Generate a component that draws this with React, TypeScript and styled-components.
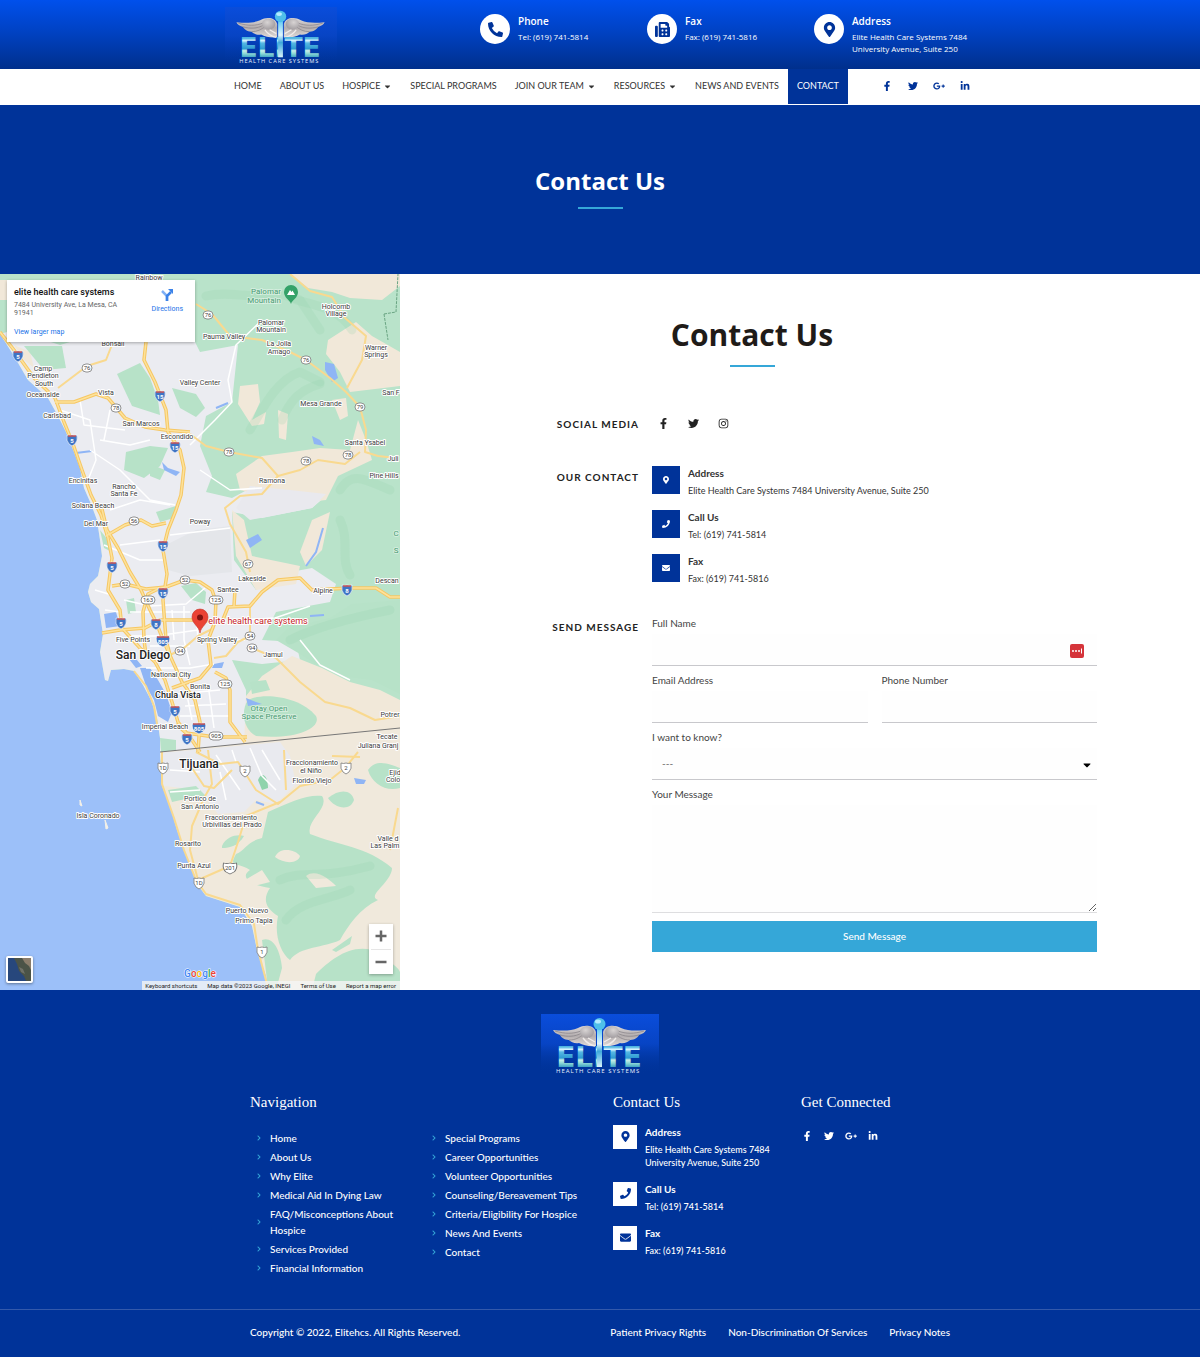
import React from 'react';
import styled, { createGlobalStyle, css } from 'styled-components';
import {
  FaCaretDown,
  FaChevronRight,
  FaEnvelope,
  FaFacebookF,
  FaFax,
  FaGooglePlusG,
  FaInstagram,
  FaLinkedinIn,
  FaMapMarkerAlt,
  FaPhone,
  FaPhoneAlt,
  FaTwitter,
} from 'react-icons/fa';

const blue = '#003399';
const sky = '#35a7d8';
const sans = '"Lato", "Open Sans", sans-serif';

const GlobalStyle = createGlobalStyle`
  *, *::before, *::after { box-sizing: border-box; }
  body {
    margin: 0;
    background: #fff;
    color: #333;
    font-family: ${sans};
    font-size: 10px;
    line-height: 14px;
  }
  h1, h2, h3, h4, p, ul { margin: 0; padding: 0; }
  ul { list-style: none; }
  a { color: inherit; text-decoration: none; }
  svg { display: block; }
`;

/* ---------- shared ---------- */

const Container = styled.div`
  width: 100%;
  max-width: 750px;
  margin: 0 auto;
`;

const Rule = styled.span`
  display: block;
  width: 45px;
  height: 2px;
  margin: 0 auto;
  background: ${sky};
`;

const Logo = ({ width, id }: { width: number; id: string }) => (
  <svg width={width} viewBox="0 0 118 60" role="img" aria-label="Elite Health Care Systems">
    <defs>
      <linearGradient id={`${id}-bg`} x1="0" y1="0" x2="0" y2="1">
        <stop offset="0" stopColor="#0a4ddb" />
        <stop offset="0.5" stopColor="#0744c4" />
        <stop offset="1" stopColor="#003399" stopOpacity="0" />
      </linearGradient>
      <linearGradient id={`${id}-letters`} gradientUnits="userSpaceOnUse" x1="0" y1="33" x2="0" y2="53">
        <stop offset="0" stopColor="#4fb4e0" />
        <stop offset="0.12" stopColor="#d9f4ff" />
        <stop offset="0.25" stopColor="#56b8e4" />
        <stop offset="0.55" stopColor="#2f9bd2" />
        <stop offset="0.65" stopColor="#c9efe9" />
        <stop offset="0.8" stopColor="#8fd9d6" />
        <stop offset="1" stopColor="#3fa3c4" />
      </linearGradient>
      <linearGradient id={`${id}-rod`} x1="0" y1="0" x2="0" y2="1">
        <stop offset="0" stopColor="#5ecbf2" />
        <stop offset="0.4" stopColor="#e2f6fd" />
        <stop offset="0.6" stopColor="#3fa9dc" />
        <stop offset="1" stopColor="#d6f2fa" />
      </linearGradient>
      <linearGradient id={`${id}-wing`} x1="0" y1="0" x2="0" y2="1">
        <stop offset="0" stopColor="#dcd8d8" />
        <stop offset="0.5" stopColor="#b3adae" />
        <stop offset="1" stopColor="#e2dcd9" />
      </linearGradient>
      <radialGradient id={`${id}-shoulder`} cx="0.4" cy="0.35" r="0.75">
        <stop offset="0" stopColor="#d8d4d4" />
        <stop offset="1" stopColor="#9a9599" />
      </radialGradient>
    </defs>
    <rect width="118" height="60" fill={`url(#${id}-bg)`} />
    {[1, -1].map((side) => (
      <g key={side} transform={side === 1 ? undefined : 'translate(117 0) scale(-1 1)'}>
        <path
          d="M12 16 C22 17 30 17 37 14 C44 10 53 11 55 18 L55 32 C49 33 42 31 38 29 C34 30 30 28 28 26 C23 26 20 23 19 21 C15 20 13 18 12 16Z"
          fill={`url(#${id}-wing)`}
        />
        <path d="M14 17 C24 20 32 20 40 17 M19 21 C27 23 33 23 41 19 M28 26 C34 26 38 24 43 20" fill="none" stroke="#8b868c" strokeWidth="0.8" />
        <ellipse cx="46" cy="18" rx="7" ry="6" fill={`url(#${id}-shoulder)`} />
        <path d="M42 24 C45 28 49 31 54 32 M47 24 L54 28" fill="none" stroke="#f1ecea" strokeWidth="1.4" />
      </g>
    ))}
    <text x="58" y="53" textAnchor="middle" fontFamily="DejaVu Sans, sans-serif" fontWeight="700" fontSize="28" fill={`url(#${id}-letters)`}>
      ELITE
    </text>
    <rect x="56" y="14" width="5" height="39" fill={`url(#${id}-rod)`} />
    <circle cx="58.5" cy="10" r="6" fill="#4fbfe9" />
    <ellipse cx="57" cy="7.5" rx="3" ry="2" fill="#b5ebff" />
    <text x="15" y="59" fontFamily="Open Sans, sans-serif" fontSize="6" letterSpacing="1" fill="#e9f1ff">
      HEALTH CARE SYSTEMS
    </text>
  </svg>
);

/* ---------- header ---------- */

const TopBar = styled.header`
  background: linear-gradient(#0050ec, #0042c4 45%, #002f8c);
`;

const TopGrid = styled(Container)`
  display: grid;
  grid-template-columns: 255px 167px 167px 1fr;
  padding: 7px 0 5px;
`;

const TopItem = styled.div`
  display: flex;
  gap: 8px;
  padding-top: 7px;
  color: #fff;
`;

const Disc = styled.span`
  display: flex;
  flex: none;
  align-items: center;
  justify-content: center;
  width: 30px;
  height: 30px;
  border-radius: 50%;
  background: #fff;
  color: ${blue};
  font-size: 15px;
`;

const TopTitle = styled.h2`
  font-family: "Open Sans", sans-serif;
  font-size: 10px;
  font-weight: 600;
  line-height: 14px;
`;

const TopText = styled.p`
  padding-top: 3px;
  font-family: "Open Sans", sans-serif;
  font-size: 8px;
  font-weight: 500;
  line-height: 12px;
`;

const NavBar = styled(Container)`
  display: flex;
  height: 36px;
`;

const NavLink = styled.a<{ $active?: boolean }>`
  display: flex;
  align-items: center;
  gap: 3px;
  height: 35px;
  padding: 0 9px;
  font-size: 9px;
  white-space: nowrap;
  text-transform: uppercase;
  ${(p) =>
    p.$active &&
    css`
      background: ${blue};
      color: #fff;
    `}
`;

const Social = styled.div<{ $gap: number; $size: number }>`
  display: flex;
  align-items: center;
  gap: ${(p) => p.$gap}px;
  font-size: ${(p) => p.$size}px;
  a {
    display: flex;
    justify-content: center;
    width: 12px;
  }
`;

const NavSocial = styled(Social)`
  margin-left: auto;
  padding-right: 4px;
  height: 35px;
  color: ${blue};
`;

/* ---------- hero ---------- */

const Hero = styled.section`
  padding: 59px 0 65px;
  background: ${blue};
  color: #fff;
  text-align: center;
`;

const HeroTitle = styled.h1`
  margin-bottom: 9px;
  font-family: "Open Sans", sans-serif;
  font-size: 24px;
  font-weight: 700;
  line-height: 34px;
`;

/* ---------- map ---------- */

const Main = styled.main`
  display: grid;
  grid-template-columns: 1fr 2fr;
`;

const MapFrame = styled.section`
  position: relative;
  overflow: hidden;
  background: #9cc0f9;
  font-family: Roboto, sans-serif;
`;

const MapCanvas = styled.svg`
  position: absolute;
  inset: 0;
  width: 100%;
  height: 100%;
`;

const PlaceCard = styled.div`
  position: absolute;
  top: 6px;
  left: 7px;
  display: flex;
  justify-content: space-between;
  width: 188px;
  padding: 6px 12px 6px 7px;
  background: #fff;
  box-shadow: 0 1px 3px rgba(0, 0, 0, 0.3);
  font-size: 7px;
  line-height: 8px;
`;

const PlaceName = styled.h2`
  font-size: 9px;
  font-weight: 500;
  line-height: 12px;
  color: #111;
`;

const PlaceAddress = styled.p`
  width: 118px;
  margin: 3px 0 11px;
  color: #666;
`;

const MapLink = styled.a`
  color: #1a73e8;
`;

const Directions = styled(MapLink)`
  display: flex;
  flex-direction: column;
  align-items: center;
  gap: 3px;
  padding-top: 2px;
`;

const ZoomBox = styled.div`
  position: absolute;
  right: 7px;
  bottom: 16px;
  display: flex;
  flex-direction: column;
  width: 24px;
  padding: 0 2px;
  background: #fff;
  box-shadow: 0 1px 3px rgba(0, 0, 0, 0.3);
`;

const ZoomButton = styled.button`
  display: flex;
  align-items: center;
  justify-content: center;
  height: 25px;
  padding: 0;
  border: 0;
  background: none;
  & + & {
    border-top: 1px solid #e6e6e6;
  }
`;

const Satellite = styled.button`
  position: absolute;
  left: 6px;
  bottom: 7px;
  width: 27px;
  height: 27px;
  padding: 0;
  overflow: hidden;
  border: 2px solid #fff;
  border-radius: 2px;
  background: #23406e;
  box-shadow: 0 1px 3px rgba(0, 0, 0, 0.4);
`;

const Attribution = styled.div`
  position: absolute;
  right: 0;
  bottom: 0;
  display: flex;
  gap: 10px;
  padding: 0 4px 0 3px;
  background: rgba(245, 245, 245, 0.8);
  color: #222;
  font-size: 6px;
  line-height: 9px;
  white-space: nowrap;
`;

type Label = [number, number, string];

const towns: Label[] = [
  [149, 280, 'Rainbow'], [113, 346, 'Bonsall'], [224, 339, 'Pauma Valley'],
  [271, 325, 'Palomar'], [271, 332, 'Mountain'], [279, 346, 'La Jolla'], [279, 354, 'Amago'],
  [336, 309, 'Holcomb'], [336, 316, 'Village'], [376, 350, 'Warner'], [376, 357, 'Springs'],
  [43, 371, 'Camp'], [43, 378, 'Pendleton'], [44, 386, 'South'], [43, 397, 'Oceanside'],
  [106, 395, 'Vista'], [57, 418, 'Carlsbad'], [200, 385, 'Valley Center'], [141, 426, 'San Marcos'],
  [177, 439, 'Escondido'], [321, 406, 'Mesa Grande'], [391, 395, 'San F'], [365, 445, 'Santa Ysabel'],
  [393, 461, 'Juli'], [384, 478, 'Pine Hills'], [272, 483, 'Ramona'], [83, 483, 'Encinitas'],
  [124, 489, 'Rancho'], [124, 496, 'Santa Fe'], [93, 508, 'Solana Beach'], [96, 526, 'Del Mar'],
  [200, 524, 'Poway'], [252, 581, 'Lakeside'], [228, 592, 'Santee'], [323, 593, 'Alpine'],
  [387, 583, 'Descan'], [133, 642, 'Five Points'], [217, 642, 'Spring Valley'], [273, 657, 'Jamul'],
  [171, 677, 'National City'], [200, 689, 'Bonita'], [165, 729, 'Imperial Beach'], [390, 717, 'Potrer'],
  [387, 739, 'Tecate'], [378, 748, 'Juliana Granj'], [312, 765, 'Fraccionamiento'], [311, 773, 'el Niño'],
  [312, 783, 'Florido Viejo'], [395, 775, 'Ejid'], [393, 782, 'Colo'], [200, 801, 'Portico de'],
  [200, 809, 'San Antonio'], [231, 820, 'Fraccionamiento'], [232, 827, 'Urbivillas del Prado'],
  [98, 818, 'Isla Coronado'], [188, 846, 'Rosarito'], [194, 868, 'Punta Azul'], [388, 841, 'Valle d'],
  [385, 848, 'Las Palm'], [247, 913, 'Puerto Nuevo'], [254, 923, 'Primo Tapia'],
];

const parks: Label[] = [
  [266, 294, 'Palomar'], [264, 303, 'Mountain'], [269, 711, 'Otay Open'], [269, 719, 'Space Preserve'],
  [396, 536, 'C'], [396, 553, 'S'],
];

const ovals: Label[] = [
  [208, 315, '76'], [87, 368, '76'], [306, 360, '76'], [116, 408, '78'], [360, 407, '79'], [229, 452, '78'],
  [306, 461, '78'], [348, 455, '78'], [134, 521, '56'], [248, 564, '67'], [125, 584, '52'], [185, 580, '52'],
  [148, 600, '163'], [216, 600, '125'], [250, 636, '54'], [252, 648, '94'], [180, 651, '94'],
  [225, 684, '125'], [216, 736, '905'],
];

const interstates: Label[] = [
  [18, 356, '5'], [160, 396, '15'], [175, 447, '15'], [72, 440, '5'], [163, 546, '15'], [112, 567, '5'],
  [163, 593, '15'], [121, 623, '5'], [156, 624, '8'], [163, 641, '805'], [347, 590, '8'], [175, 711, '5'],
  [199, 728, '805'], [187, 739, '5'],
];

const mexican: Label[] = [
  [163, 768, '1D'], [245, 771, '2'], [346, 768, '2'], [230, 868, '201'], [199, 883, '1D'], [262, 952, '1'],
];

const coast =
  'M0 334 L14 356 L28 380 L48 398 L58 416 L66 432 L74 452 L80 468 L84 488 L91 504 L97 520 L100 540 L102 556 L98 576 L90 584 L88 592 L91 602 L99 609 L103 634 L100 652 L105 680 L108 681 L111 670 L124 669 L134 671 L143 685 L151 700 L157 718 L160 738 L160 753 L162 786 L170 806 L177 830 L187 857 L197 884 L206 896 L240 907 L252 926 L257 950 L266 976 L269 990';

const freeways = [
  'M0 332 L14 350 L34 378 L55 398 L64 422 L73 444 L82 470 L91 495 L101 515 L108 538 L112 558 L108 590 L120 610 L122 628',
  'M101 505 L107 530 L118 548 L130 572 L141 590 L150 610 L156 622 L164 642 L172 660 L182 682 L195 700 L200 722 L198 752',
  'M146 342 L144 360 L155 382 L166 410 L168 432 L180 450 L184 468 L181 495 L176 510 L168 530 L163 550 L167 574 L163 600 L166 640 L170 655',
  'M102 633 L120 630 L145 628 L160 620 L200 620 L222 622 L228 607 L250 606 L262 592 L278 580 L300 578 L312 590 L350 588 L376 588 L390 597 L400 597',
  'M122 628 L140 648 L155 662 L165 680 L172 702 L178 722 L192 740 L200 752',
  'M55 402 L74 402 L96 394 L108 398 L125 418 L145 427 L165 430 L190 432',
  'M106 536 L125 525 L141 520 L152 526 L166 523',
  'M112 586 L125 584 L146 589 L166 587 L185 580 L200 582 L212 590 L216 602',
  'M160 588 L148 594 L143 612 L144 640 L146 655',
  'M216 600 L215 622 L208 640 L211 665 L200 678 L172 688',
  'M215 672 L226 678 L230 690 L230 722 L245 742',
  'M176 724 L186 733 L215 737 L247 737',
  'M235 590 L234 606',
];

const highways = [
  'M58 388 L87 366 L106 360 L113 342',
  'M196 304 L212 314 L230 336 L262 340 L290 352 L306 360 L330 378 L346 392 L360 407 L366 430 L365 452 L378 456 L396 458',
  'M290 274 L310 291 L332 297 L345 318 L366 336 L362 360 L347 388',
  'M190 434 L206 446 L229 452 L262 458 L278 476 L300 470 L318 460 L345 464 L360 452',
  'M278 476 L262 494 L240 496 L225 508 L230 524 L246 552 L250 572',
  'M170 655 L184 648 L198 636 L214 628',
  'M214 658 L226 656 L238 642 L250 636 L250 606',
  'M252 648 L276 658 L300 682 L325 702 L350 708 L375 720 L400 716',
  'M134 671 L146 686 L154 706 L158 730',
  'M162 752 L162 784 L174 818 L184 850 L196 880 L206 894 L240 905 L254 924 L258 950 L268 988',
  'M196 752 L220 764 L238 762 L256 790 L278 804 L300 786 L330 780 L345 768 L358 752',
  'M208 750 L212 784 L204 798 L192 826 L190 850 L198 880 L230 866 L238 842 L246 816 L280 802',
  'M190 765 L204 786 L214 788 L232 770',
  'M284 750 L286 790 M332 756 L360 757 M398 808 L390 850',
];

const streets =
  'M60 410 L90 420 L96 460 L88 480 M80 400 L84 425 L125 430 M100 440 L130 445 L150 440 M90 450 L120 470 L150 500 L175 505 M110 410 L104 440 M190 445 L215 420 L232 402 L228 380 L236 345 L262 320 M200 470 L230 490 L262 488 M110 510 L140 500 L170 505 M120 545 L160 540 M104 545 L140 560 L165 560 M170 535 L230 528 M95 590 L112 595 M105 610 L120 612 M124 600 L150 606 L186 604 L205 588 M130 612 L190 612 M130 636 L155 636 L198 630 M150 646 L190 646 M184 606 L184 640 L190 665 M172 610 L174 640 M196 610 L198 640 M146 668 L190 668 L214 664 M176 694 L220 690 M185 706 L226 704 M180 716 L230 716 M186 690 L192 720 M208 684 L214 728 M222 640 L245 640 M238 620 L275 618 L310 606 M170 770 L200 772 M220 772 L226 800 M250 748 L262 776 L276 790 M262 750 L280 780 M216 755 L240 790 M170 792 L200 790 M232 750 L236 762 M300 640 L320 665 L350 680';

const greens = [
  'M117 374 L140 363 L150 378 L158 400 L160 415 L132 406Z',
  'M172 388 L196 394 L205 408 L196 417 L180 408Z',
  'M126 452 L150 446 L168 448 L160 466 L144 478 L124 470Z',
  'M24 346 L62 346 L66 368 L44 370Z',
  'M181 586 L196 583 L206 592 L205 604 L192 600Z',
  'M150 464 L165 470 L160 480 L150 476Z',
  'M126 600 L134 598 L136 612 L128 614Z',
  'M156 512 L176 506 L174 518 L160 522Z',
  'M100 530 L108 540 L112 552 L104 548Z',
  'M248 700 C262 692 300 696 316 716 C322 728 296 740 256 736 C244 730 240 712 248 700Z',
  'M250 682 L266 680 L270 690 L252 694Z',
  'M276 640 L288 628 L330 618 L352 604 L400 600 L400 694 L372 680 L340 676 L316 664 L300 654Z',
  'M168 790 L196 786 L206 796 L190 798 L172 802Z',
  'M160 738 L176 740 L176 750 L161 752Z',
  'M368 770 C376 758 390 764 400 768 L400 788 C386 792 372 784 368 770Z',
  'M328 798 C340 788 352 790 354 800 C350 812 334 808 328 798Z',
  'M268 812 C290 802 308 794 322 796 C330 808 306 820 310 834 C340 846 366 846 392 868 C392 882 366 896 378 900 C360 908 348 926 340 940 C324 948 300 946 290 960 C280 952 274 934 278 916 C266 908 262 900 270 888 C254 886 238 878 250 870 C238 862 228 868 236 854 C246 850 246 842 262 838Z',
  'M222 846 C226 836 238 834 244 836 C238 846 230 848 222 848Z',
  'M262 940 C272 936 280 948 282 968 L276 990 L268 988Z',
  'M316 974 C330 960 350 944 372 950 C386 960 398 966 400 972 L400 990 L312 990Z',
  'M332 950 L352 936 L350 944 L336 952Z',
];

const beiges = [
  'M290 274 L400 274 L400 286 L382 300 L350 298 L332 292 L308 288Z',
  'M328 340 L356 322 L372 336 L400 352 L400 386 L350 392 L340 372 L326 354Z',
  'M240 386 L258 384 L260 402 L252 420 L266 412 L264 424 L252 426 L238 404Z',
  'M278 410 L288 414 L286 440 L279 438Z',
  'M236 474 L262 456 L292 452 L320 448 L350 450 L358 420 L366 440 L372 460 L338 476 L326 500 L292 504 L240 490Z',
  'M332 400 L346 398 L348 416 L340 420Z',
  'M232 510 L244 520 L252 556 L300 566 L296 584 L256 590 L236 556Z',
  'M0 280 L8 280 L8 300 L0 300Z',
  'M14 345 L30 352 L34 368 L22 358Z',
  'M312 520 L330 512 L322 550 L306 566 L300 552Z',
  'M244 746 L246 696 L262 676 L292 656 L322 668 L350 682 L380 690 L400 700 L400 732Z',
];

const relief = [
  'M206 296 C230 290 250 300 280 294 L300 300 L320 330',
  'M250 430 C262 410 276 380 300 372 L320 382',
  'M296 300 C320 306 340 310 352 330',
  'M282 420 C290 400 300 390 320 384',
  'M340 490 C352 470 366 480 390 490',
  'M290 640 C310 630 340 620 390 610',
  'M340 520 C350 540 340 560 350 575',
  'M280 880 C300 870 320 880 370 866',
  'M286 920 C300 900 330 900 350 890',
];

const shieldPath = 'M-5 -5 Q-2.5 -4 0 -5 Q2.5 -4 5 -5 Q6 1 3 4 L0 6 L-3 4 Q-6 1 -5 -5Z';

const CountyMap = () => (
  <MapCanvas viewBox="0 274 400 716" preserveAspectRatio="xMinYMin slice" role="img" aria-label="Map of San Diego County">
    <rect y="274" width="400" height="716" fill="#9cc0f9" />
    <path d={`${coast} L400 990 L400 274 L0 274Z`} fill="#b9e3ca" />
    <path
      d="M0 334 L14 330 L60 345 L70 342 L195 342 L200 352 L238 345 L232 402 L206 416 L200 446 L212 476 L206 492 L232 498 L262 482 L300 488 L326 496 L312 508 L262 518 L232 512 L234 560 L256 590 L280 574 L312 568 L336 584 L330 602 L276 612 L262 640 L296 642 L300 660 L262 664 L232 660 L246 690 L246 745 L160 753 L160 738 L157 718 L151 700 L143 685 L134 671 L124 669 L111 670 L108 681 L105 680 L100 652 L103 634 L99 609 L91 602 L88 592 L90 584 L98 576 L102 556 L100 540 L97 520 L91 504 L84 488 L80 468 L74 452 L66 432 L58 416 L48 398 L28 380 L14 356Z"
      fill="#ebecf1"
    />
    <path d="M160 548 L196 530 L230 526 L232 572 L190 576 L168 570Z" fill="#e4e6ea" />
    {beiges.map((d) => <path key={d} d={d} fill="#f1e8d9" />)}
    <path d="M250 486 L290 490 L326 494 L312 508 L250 520 L236 508Z" fill="#e9e9ee" />
    <path
      d="M160 752 L400 728 L400 990 L269 990 L266 976 L257 950 L252 926 L240 907 L206 896 L197 884 L187 857 L177 830 L170 806 L162 786Z"
      fill="#f0e9dc"
    />
    <path d="M160 753 L280 742 L290 756 L296 784 L276 804 L256 800 L244 812 L218 814 L200 790 L164 786Z" fill="#e9eaef" />
    {greens.map((d) => <path key={d} d={d} fill="#b7e2c8" />)}
    <path d="M275 857 C280 846 296 850 300 856 C298 864 284 864 275 857Z M306 876 C316 868 330 880 336 886 L316 888Z M245 880 L262 870 L270 882 L254 886Z" fill="#f0e9dc" />
    <path d="M258 780 C262 770 268 776 268 788 L262 790Z" fill="#8fd3ac" />
    {relief.map((d) => <path key={d} d={d} fill="none" stroke="#8fd0aa" strokeOpacity="0.2" strokeWidth="9" strokeLinejoin="round" strokeLinecap="round" />)}
    <path
      d="M140 668 L150 668 L158 680 L166 694 L172 712 L168 722 L158 716 L154 700 L146 686Z M104 614 L116 612 L120 626 L106 628Z M122 650 L132 654 L142 666 L136 668Z M325 362 L334 364 L338 378 L332 382 L325 370Z M246 540 L258 534 L262 540 L250 548Z M214 664 L224 662 L222 668 L212 668Z M246 698 L256 702 L262 704 L248 706Z M312 436 L320 440 L324 446 L314 444Z M354 778 L366 780 L364 784 L356 784Z M162 462 L168 468 L180 472 L176 476 L164 470Z"
      fill="#8fb5f5"
    />
    <path d="M323 528 L316 552 L306 566 M76 453 L92 451 M216 408 L228 403 M310 616 L324 615 M256 802 L264 805" fill="none" stroke="#8fb5f5" strokeWidth="2" />
    <path d={streets} fill="none" stroke="#fff" strokeWidth="1.5" strokeLinejoin="round" />
    {highways.map((d) => <path key={d} d={d} fill="none" stroke="#f9d98f" strokeWidth="2" strokeLinejoin="round" />)}
    {freeways.map((d) => <path key={d} d={d} fill="none" stroke="#f6c763" strokeWidth="3.5" strokeLinejoin="round" />)}
    {freeways.map((d) => <path key={d} d={d} fill="none" stroke="#fde29b" strokeWidth="1.5" strokeLinejoin="round" />)}
    <path d="M160 752 L400 728" stroke="#777" strokeWidth="1" />
    <path d="M384 314 L396 312 L398 274 M384 314 L388 340" fill="none" stroke="#6aa583" strokeDasharray="3 1" />
    <path d="M80 800 L82 806 L80 805Z M105 820 L108 828 L106 829Z" fill="#f3f0e8" stroke="#f3f0e8" />

    <g fontFamily="Roboto, sans-serif" textAnchor="middle">
      {ovals.map(([x, y, t]) => (
        <g key={`${x}-${y}`} fontSize="6" fill="#444">
          <rect x={x - (t.length > 2 ? 7 : 5)} y={y - 4} width={t.length > 2 ? 14 : 10} height="8" rx="4" fill="#fff" stroke="#777" strokeWidth="0.8" />
          <text x={x} y={y + 2}>{t}</text>
        </g>
      ))}
      {interstates.map(([x, y, t]) => (
        <g key={`${x}-${y}`} transform={`translate(${x} ${y})`} fontSize="6" fontWeight="700" fill="#fff">
          <path d={shieldPath} transform={t.length > 2 ? 'scale(1.3 1)' : undefined} fill="#3f74c4" stroke="#fff" strokeWidth="0.6" />
          <path d={t.length > 2 ? 'M-6 -4 H6' : 'M-4 -4 H4'} stroke="#d0504c" strokeWidth="1.4" />
          <text y="3">{t}</text>
        </g>
      ))}
      {mexican.map(([x, y, t]) => (
        <g key={`${x}-${y}`} transform={`translate(${x} ${y})`} fontSize="6" fill="#444">
          <path d={shieldPath} transform={t.length > 2 ? 'scale(1.3 1)' : undefined} fill="#fff" stroke="#777" strokeWidth="0.8" />
          <text y="2">{t}</text>
        </g>
      ))}
      <g stroke="#fff" strokeWidth="2" strokeLinejoin="round" paintOrder="stroke" fill="#3c3c3c">
        {towns.map(([x, y, t]) => <text key={`${x}-${y}`} x={x} y={y} fontSize="7">{t}</text>)}
        {parks.map(([x, y, t]) => <text key={`${x}-${y}`} x={x} y={y} fontSize="8" fill="#4c9c74" strokeOpacity="0.4">{t}</text>)}
        <g fontWeight="500" fill="#222">
          <text x="143" y="659" fontSize="12">San Diego</text>
          <text x="178" y="698" fontSize="9">Chula Vista</text>
          <text x="199" y="768" fontSize="12">Tijuana</text>
        </g>
        <text x="258" y="624" fontSize="9" fill="#c5221f">elite health care systems</text>
      </g>
      <g transform="translate(200 0)">
        <path d="M0 633 C-1 626 -8 624 -8 617 A8 8 0 0 1 8 617 C8 624 1 626 0 633Z" fill="#ea4335" stroke="#c5362b" strokeWidth="0.6" />
        <circle cy="617.5" r="3" fill="#811411" />
      </g>
      <path d="M291 304 C290 300 284 298 284 292 A7 7 0 0 1 298 292 C298 298 292 300 291 304Z" fill="#34a268" />
      <path d="M287 295 L290 290 L291.5 292 L292.5 290.5 L295 295Z" fill="#fff" />
      <text x="200" y="977" fontSize="10" fontWeight="500" stroke="#fff" strokeWidth="1" paintOrder="stroke">
        <tspan fill="#4285f4">G</tspan><tspan fill="#ea4335">o</tspan><tspan fill="#fbbc05">o</tspan><tspan fill="#4285f4">g</tspan><tspan fill="#34a853">l</tspan><tspan fill="#ea4335">e</tspan>
      </text>
    </g>
  </MapCanvas>
);

const MapPanel = () => (
  <MapFrame aria-label="Location">
    <CountyMap />
    <PlaceCard>
      <div>
        <PlaceName>elite health care systems</PlaceName>
        <PlaceAddress>7484 University Ave, La Mesa, CA 91941</PlaceAddress>
        <MapLink href="#map">View larger map</MapLink>
      </div>
      <Directions href="#directions">
        <svg width="14" height="14" viewBox="0 0 14 14" aria-hidden="true">
          <path d="M7 13 V8 L2 3" fill="none" stroke="#7fb0f5" strokeWidth="2.5" />
          <path d="M7 13 V8 L11 4" fill="none" stroke="#3b82e8" strokeWidth="2.5" />
          <path d="M8 1 H13 V6Z" fill="#3b82e8" />
        </svg>
        Directions
      </Directions>
    </PlaceCard>
    <ZoomBox>
      <ZoomButton type="button" aria-label="Zoom in">
        <svg width="12" height="12" viewBox="0 0 12 12"><path d="M6 0.5 V11.5 M0.5 6 H11.5" stroke="#666" strokeWidth="2.5" /></svg>
      </ZoomButton>
      <ZoomButton type="button" aria-label="Zoom out">
        <svg width="12" height="12" viewBox="0 0 12 12"><path d="M0.5 6 H11.5" stroke="#666" strokeWidth="2.5" /></svg>
      </ZoomButton>
    </ZoomBox>
    <Satellite type="button" aria-label="Show satellite imagery">
      <svg width="23" height="23" viewBox="0 0 23 23">
        <rect width="23" height="23" fill="#27477c" />
        <path d="M6 0 L9 6 L11 13 L16 18 L18 23 H23 V0Z" fill="#4b5347" />
        <path d="M14 0 L17 5 L21 8 L23 12 V0Z" fill="#8b7d6b" />
        <path d="M11 9 L15 11 L17 16 L13 14Z" fill="#6f7168" />
      </svg>
    </Satellite>
    <Attribution>
      <span>Keyboard shortcuts</span>
      <span>Map data ©2023 Google, INEGI</span>
      <a href="#terms">Terms of Use</a>
      <a href="#report">Report a map error</a>
    </Attribution>
  </MapFrame>
);

/* ---------- contact panel ---------- */

const Panel = styled.section`
  padding: 39px 103px 38px 7px;
`;

const PanelTitle = styled.h2`
  margin-bottom: 8px;
  color: #1f1b18;
  font-family: "Open Sans", sans-serif;
  font-size: 30px;
  font-weight: 700;
  line-height: 44px;
  text-align: center;
`;

const Rows = styled.div`
  display: grid;
  gap: 31px;
  margin-top: 46px;
`;

const Row = styled.div`
  display: grid;
  grid-template-columns: 232px 1fr;
  gap: 13px;
`;

const RowLabel = styled.h3`
  padding-top: 4px;
  color: #222;
  font-size: 10px;
  font-weight: 700;
  letter-spacing: 1px;
  line-height: 14px;
  text-align: right;
  text-transform: uppercase;
`;

const RowSocial = styled(Social)`
  height: 22px;
  padding-left: 5px;
  color: #222;
`;

const ContactList = styled.ul`
  display: flex;
  flex-direction: column;
  gap: 13px;
`;

const ContactItem = styled.li`
  display: flex;
  gap: 8px;
`;

const Tile = styled.span<{ $invert?: boolean }>`
  display: flex;
  flex: none;
  align-items: center;
  justify-content: center;
  width: ${(p) => (p.$invert ? 24 : 28)}px;
  height: ${(p) => (p.$invert ? 24 : 28)}px;
  background: ${(p) => (p.$invert ? '#fff' : blue)};
  color: ${(p) => (p.$invert ? blue : '#fff')};
  font-size: ${(p) => (p.$invert ? 11 : 8)}px;
`;

const ItemTitle = styled.h4`
  margin-bottom: 4px;
  font-size: 10px;
  font-weight: 700;
  line-height: 14px;
`;

const ItemText = styled.p`
  font-size: 9px;
  line-height: 13px;
`;

const Form = styled.form`
  display: grid;
  grid-template-columns: 1fr 1fr;
  gap: 7px 14px;
`;

const Field = styled.div<{ $half?: boolean }>`
  position: relative;
  display: flex;
  flex-direction: column;
  gap: 3px;
  grid-column: ${(p) => (p.$half ? 'auto' : '1 / -1')};
`;

const FieldLabel = styled.label`
  color: #444;
  font-size: 10px;
  line-height: 15px;
`;

const control = css`
  width: 100%;
  border: 0;
  border-bottom: 1px solid #c8c8cc;
  border-radius: 0;
  outline: 0;
  background: #fefefe;
  color: #666;
  font: 10px/15px ${sans};
`;

const Input = styled.input`
  ${control}
  height: 32px;
  padding: 0 10px;
`;

const Select = styled.select`
  ${control}
  height: 32px;
  padding: 0 10px;
  appearance: none;
`;

const SelectCaret = styled(FaCaretDown)`
  position: absolute;
  right: 4px;
  bottom: 9px;
  color: #000;
  font-size: 12px;
  pointer-events: none;
`;

const PasswordBadge = styled.svg`
  position: absolute;
  right: 13px;
  bottom: 8px;
`;

const TextArea = styled.textarea`
  ${control}
  display: block;
  height: 108px;
  padding: 5px 10px;
  border-color: #dedee0;
  resize: vertical;
`;

const Submit = styled.button`
  grid-column: 1 / -1;
  height: 31px;
  margin-top: 1px;
  border: 0;
  background: ${sky};
  color: #fff;
  font: 500 10px/15px ${sans};
`;

/* ---------- footer ---------- */

const Footer = styled.footer`
  padding-top: 24px;
  background: ${blue};
  color: #fff;
  font-weight: 500;
`;

const FooterLogo = styled.div`
  display: flex;
  justify-content: center;
  margin-bottom: 18px;
`;

const FooterInner = styled.div`
  width: 100%;
  max-width: 700px;
  margin: 0 auto;
`;

const FooterGrid = styled(FooterInner)`
  display: grid;
  grid-template-columns: 363px 188px 1fr;
  padding-bottom: 33px;
`;

const FooterTitle = styled.h3`
  font-family: "Liberation Serif", serif;
  font-size: 15px;
  font-weight: 400;
  line-height: 20px;
`;

const LinkColumns = styled.div`
  display: grid;
  grid-template-columns: 175px 1fr;
  align-items: start;
  margin-top: 18px;
`;

const LinkList = styled.ul`
  display: flex;
  flex-direction: column;
  gap: 3px;
`;

const LinkItem = styled.li`
  display: flex;
  align-items: center;
  gap: 8px;
  padding: 0 16px 0 6px;
  font-size: 10px;
  line-height: 16px;
  svg {
    flex: none;
    width: 6px;
    color: ${sky};
    font-size: 6px;
  }
`;

const FooterContacts = styled(ContactList)`
  margin-top: 13px;
`;

const FooterSocial = styled(Social)`
  height: 22px;
  margin-top: 13px;
`;

const Legal = styled.div`
  border-top: 1px solid #3359ab;
`;

const LegalInner = styled(FooterInner)`
  display: flex;
  justify-content: space-between;
  padding: 15px 0 17px;
  font-size: 10px;
  line-height: 15px;
`;

const LegalLinks = styled.nav`
  display: flex;
  gap: 22px;
`;

/* ---------- data ---------- */

const navItems = [
  { label: 'Home' },
  { label: 'About Us' },
  { label: 'Hospice', menu: true },
  { label: 'Special Programs' },
  { label: 'Join Our Team', menu: true },
  { label: 'Resources', menu: true },
  { label: 'News and Events' },
  { label: 'Contact', active: true },
];

const contacts = [
  { title: 'Address', text: 'Elite Health Care Systems 7484 University Avenue, Suite 250', icon: <FaMapMarkerAlt /> },
  { title: 'Call Us', text: 'Tel: (619) 741-5814', icon: <FaPhone /> },
  { title: 'Fax', text: 'Fax: (619) 741-5816', icon: <FaEnvelope /> },
];

const footerLinks = [
  ['Home', 'About Us', 'Why Elite', 'Medical Aid In Dying Law', 'FAQ/Misconceptions About Hospice', 'Services Provided', 'Financial Information'],
  ['Special Programs', 'Career Opportunities', 'Volunteer Opportunities', 'Counseling/Bereavement Tips', 'Criteria/Eligibility For Hospice', 'News And Events', 'Contact'],
];

const shareLinks = (
  <>
    <a href="#facebook" aria-label="Facebook"><FaFacebookF /></a>
    <a href="#twitter" aria-label="Twitter"><FaTwitter /></a>
    <a href="#google" aria-label="Google Plus"><FaGooglePlusG size={12} /></a>
    <a href="#linkedin" aria-label="LinkedIn"><FaLinkedinIn /></a>
  </>
);

const ContactItems = ({ invert }: { invert?: boolean }) => (
  <>
    {contacts.map((c) => (
      <ContactItem key={c.title}>
        <Tile $invert={invert}>{c.icon}</Tile>
        <div>
          <ItemTitle>{c.title}</ItemTitle>
          <ItemText>{c.text}</ItemText>
        </div>
      </ContactItem>
    ))}
  </>
);

export default function App() {
  return (
    <>
      <GlobalStyle />
      <TopBar>
        <TopGrid>
          <a href="#home"><Logo width={112} id="top" /></a>
          <TopItem>
            <Disc><FaPhoneAlt /></Disc>
            <div><TopTitle>Phone</TopTitle><TopText>Tel: (619) 741-5814</TopText></div>
          </TopItem>
          <TopItem>
            <Disc><FaFax /></Disc>
            <div><TopTitle>Fax</TopTitle><TopText>Fax: (619) 741-5816</TopText></div>
          </TopItem>
          <TopItem>
            <Disc><FaMapMarkerAlt /></Disc>
            <div><TopTitle>Address</TopTitle><TopText>Elite Health Care Systems 7484 University Avenue, Suite 250</TopText></div>
          </TopItem>
        </TopGrid>
      </TopBar>
      <NavBar as="nav">
        {navItems.map((n) => (
          <NavLink key={n.label} href="#nav" $active={n.active}>
            {n.label}
            {n.menu && <FaCaretDown size={9} />}
          </NavLink>
        ))}
        <NavSocial $gap={14} $size={10}>{shareLinks}</NavSocial>
      </NavBar>

      <Hero>
        <HeroTitle>Contact Us</HeroTitle>
        <Rule />
      </Hero>

      <Main>
        <MapPanel />
        <Panel>
          <PanelTitle>Contact Us</PanelTitle>
          <Rule />
          <Rows>
            <Row>
              <RowLabel>Social Media</RowLabel>
              <RowSocial $gap={18} $size={11}>
                <a href="#facebook" aria-label="Facebook"><FaFacebookF /></a>
                <a href="#twitter" aria-label="Twitter"><FaTwitter /></a>
                <a href="#instagram" aria-label="Instagram"><FaInstagram /></a>
              </RowSocial>
            </Row>
            <Row>
              <RowLabel>Our Contact</RowLabel>
              <ContactList><ContactItems /></ContactList>
            </Row>
            <Row>
              <RowLabel>Send Message</RowLabel>
              <Form>
                <Field>
                  <FieldLabel htmlFor="name">Full Name</FieldLabel>
                  <Input id="name" />
                  <PasswordBadge width="14" height="14" viewBox="0 0 14 14" aria-hidden="true">
                    <rect width="14" height="14" rx="2" fill="#d5343a" />
                    <circle cx="3" cy="7" r="1" fill="#fff" />
                    <circle cx="6" cy="7" r="1" fill="#fff" />
                    <circle cx="9" cy="7" r="1" fill="#fff" />
                    <path d="M11.5 4.5 V9.5" stroke="#fff" />
                  </PasswordBadge>
                </Field>
                <Field $half>
                  <FieldLabel htmlFor="email">Email Address</FieldLabel>
                  <Input id="email" type="email" />
                </Field>
                <Field $half>
                  <FieldLabel htmlFor="phone">Phone Number</FieldLabel>
                  <Input id="phone" type="tel" />
                </Field>
                <Field>
                  <FieldLabel htmlFor="topic">I want to know?</FieldLabel>
                  <Select id="topic"><option>---</option></Select>
                  <SelectCaret />
                </Field>
                <Field>
                  <FieldLabel htmlFor="message">Your Message</FieldLabel>
                  <TextArea id="message" />
                </Field>
                <Submit type="button">Send Message</Submit>
              </Form>
            </Row>
          </Rows>
        </Panel>
      </Main>

      <Footer>
        <FooterLogo><Logo width={118} id="bottom" /></FooterLogo>
        <FooterGrid>
          <div>
            <FooterTitle>Navigation</FooterTitle>
            <LinkColumns>
              {footerLinks.map((list) => (
                <LinkList key={list[0]}>
                  {list.map((label) => (
                    <LinkItem key={label}><FaChevronRight /><a href="#page">{label}</a></LinkItem>
                  ))}
                </LinkList>
              ))}
            </LinkColumns>
          </div>
          <div>
            <FooterTitle>Contact Us</FooterTitle>
            <FooterContacts><ContactItems invert /></FooterContacts>
          </div>
          <div>
            <FooterTitle>Get Connected</FooterTitle>
            <FooterSocial $gap={10} $size={10}>{shareLinks}</FooterSocial>
          </div>
        </FooterGrid>
        <Legal>
          <LegalInner>
            <p>Copyright © 2022, Elitehcs. All Rights Reserved.</p>
            <LegalLinks>
              <a href="#patient">Patient Privacy Rights</a>
              <a href="#nondiscrimination">Non-Discrimination Of Services</a>
              <a href="#privacy">Privacy Notes</a>
            </LegalLinks>
          </LegalInner>
        </Legal>
      </Footer>
    </>
  );
}
